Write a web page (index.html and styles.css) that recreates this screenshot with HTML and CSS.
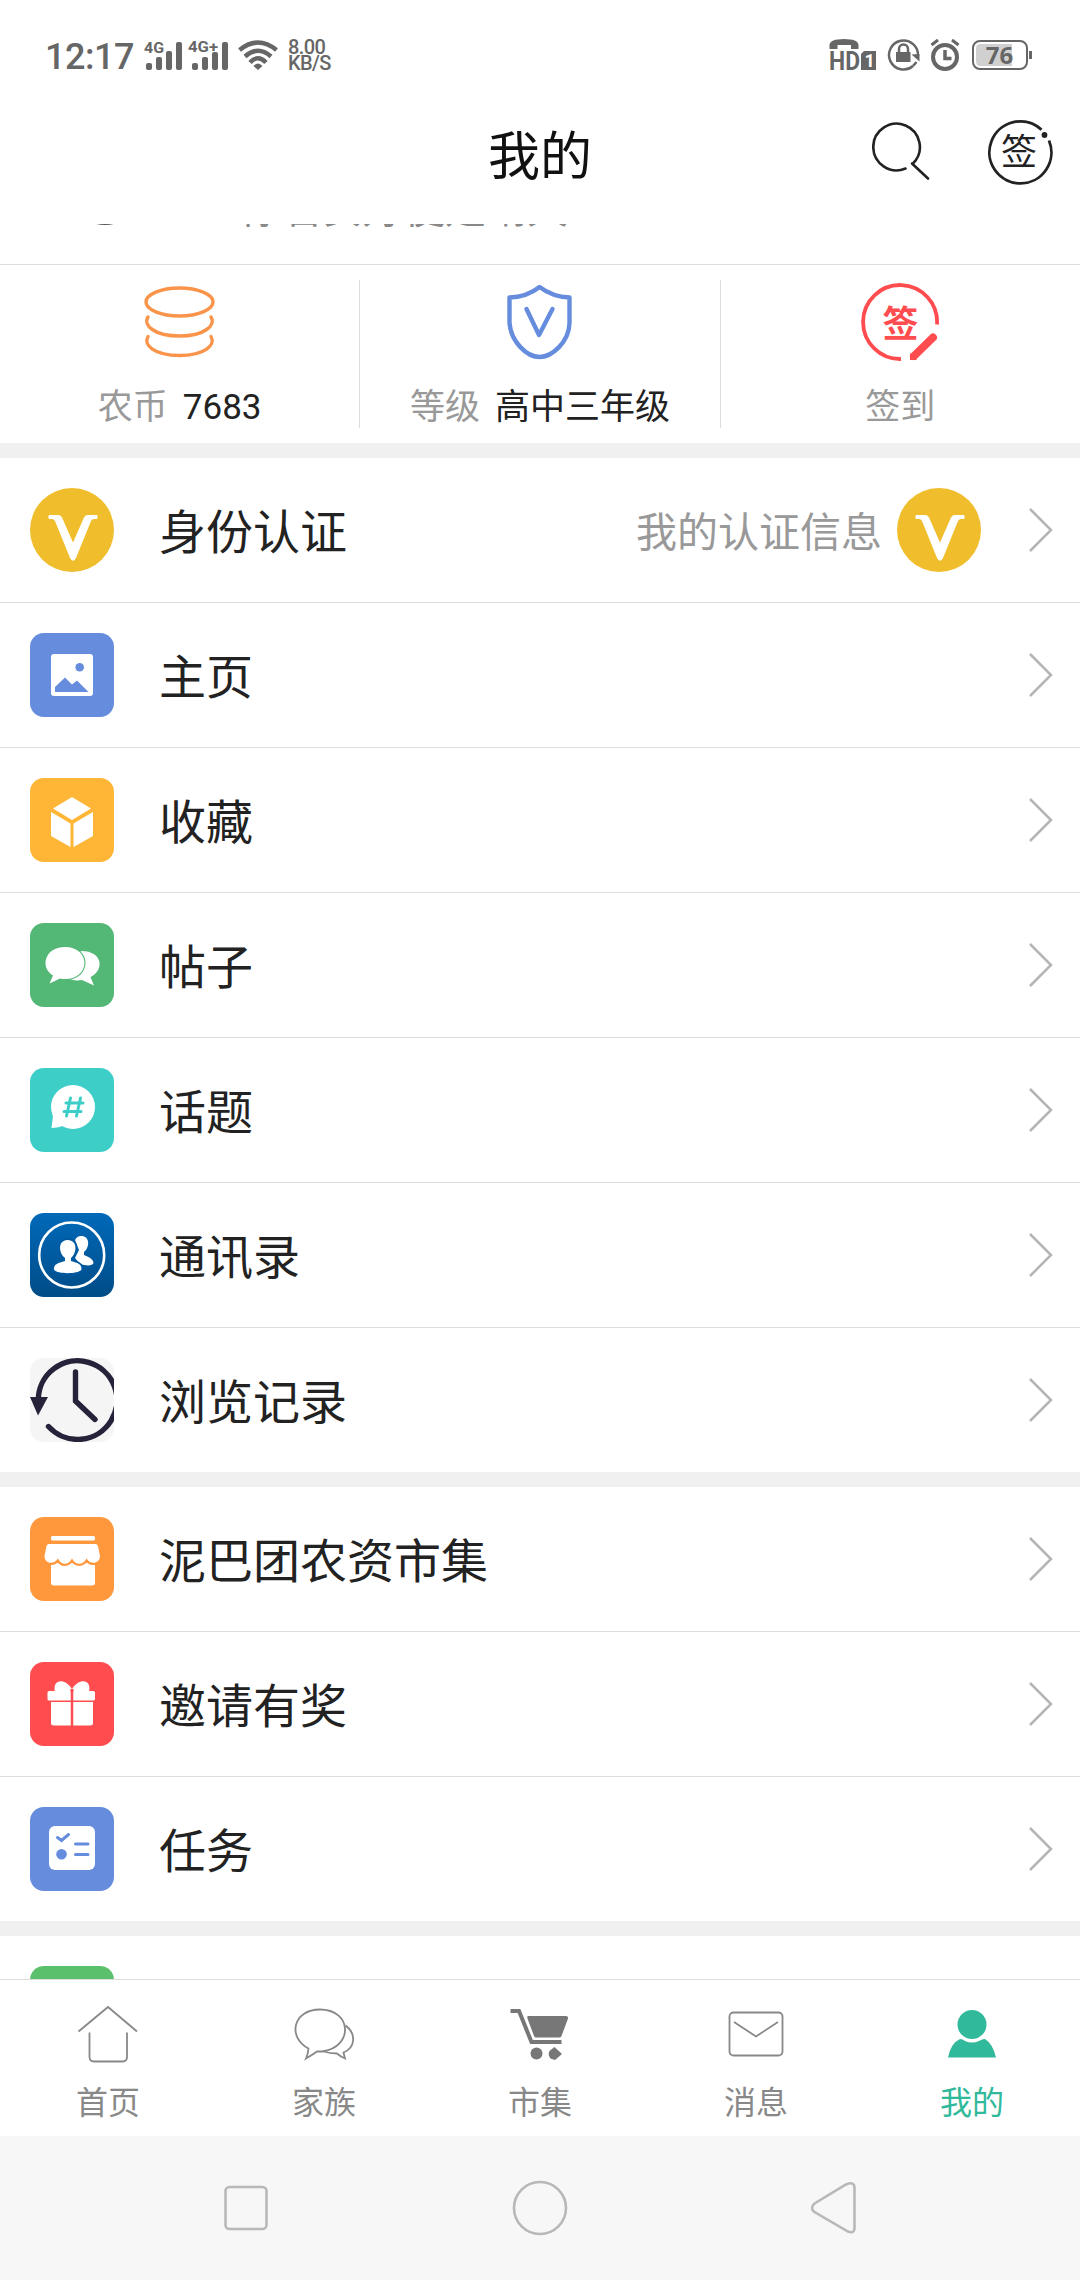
FILE: index.html
```html
<!DOCTYPE html>
<html lang="zh-CN">
<head>
    <meta charset="UTF-8">
    <title>我的</title>
    <link rel="stylesheet" href="styles.css">
</head>
<body>
    <div class="status-bar">
        <span class="time">12:17</span>
        <svg class="signal" width="39" height="32" viewBox="0 0 39 32">
            <text x="0" y="14" class="net" textLength="20" lengthAdjust="spacingAndGlyphs">4G</text>
            <rect x="2" y="24" width="6" height="7" rx="2"/>
            <rect x="12" y="18" width="6" height="13" rx="2"/>
            <rect x="22" y="12" width="6" height="19" rx="2"/>
            <rect x="32" y="3" width="6" height="28" rx="2"/>
        </svg>
        <svg class="signal second" width="41" height="32" viewBox="0 0 41 32">
            <text x="0" y="13" class="net" textLength="30" lengthAdjust="spacingAndGlyphs">4G+</text>
            <rect x="4" y="24" width="6" height="7" rx="2"/>
            <rect x="14" y="18" width="6" height="13" rx="2"/>
            <rect x="24" y="13" width="6" height="18" rx="2"/>
            <rect x="34" y="3" width="6" height="28" rx="2"/>
        </svg>
        <svg class="wifi" width="40" height="32" viewBox="0 0 40 32">
            <g fill="none" stroke="#666" stroke-width="4.500">
                <path d="M1.500 11Q20 -4 38.500 11"/>
                <path d="M7 17.500Q20 6 33 17.500"/>
                <path d="M12 23.500Q20 15 28 23.500"/>
            </g>
            <path d="M15.500 27Q20 22 24.500 27L20 31Z"/>
        </svg>
        <div class="speed">
            <span>8.00</span>
            <span>KB/S</span>
        </div>
        <div class="status-right">
            <svg width="48" height="34" viewBox="0 0 48 34">
                <path d="M0.500 11V7Q1 1 15 1T29.500 7V11H22V7H8.500V11Z"/>
                <text x="0" y="31.500" class="hd" textLength="31" lengthAdjust="spacingAndGlyphs">HD</text>
                <path d="M35 13H47V32H32V16Z"/>
                <text x="35.500" y="29" class="sim">1</text>
            </svg>
            <svg width="34" height="34" viewBox="0 0 34 34">
                <path d="M26 28A14.500 14.500 0 1 1 31 18" fill="none" stroke="#666" stroke-width="2.500"/>
                <path d="M24.500 16.500L32.500 23.500V16Z"/>
                <path d="M29.500 24L26 28" stroke="#666" stroke-width="2.500"/>
                <rect x="9" y="14" width="14.500" height="10"/>
                <path d="M12 15V11a4.500 4.500 0 0 1 9 0V15" fill="none" stroke="#666" stroke-width="2.500"/>
            </svg>
            <svg width="30" height="34" viewBox="0 0 30 34">
                <g fill="none" stroke="#666">
                    <circle cx="14" cy="19" r="12" stroke-width="4"/>
                    <path d="M14 12V20.500H20.500" stroke-width="3.500"/>
                    <path d="M0.500 7L7 2M27.500 7L21 2" stroke-width="3"/>
                </g>
            </svg>
            <svg width="62" height="34" viewBox="0 0 62 34">
                <rect x="2" y="3" width="54" height="28" rx="7" fill="none" stroke="#666" stroke-width="2"/>
                <path d="M9 6H41V28H9Q5 28 5 23V11Q5 6 9 6Z" fill="#d0d0d0"/>
                <rect x="58" y="13" width="3" height="8"/>
                <text x="28.500" y="26" class="percent" text-anchor="middle">76</text>
            </svg>
        </div>
    </div>

    <header class="header">
        <h1>我的</h1>
        <div class="header-actions">
            <svg width="60" height="60" viewBox="0 0 60 60" fill="none" stroke="#222" stroke-width="2.600">
                <path d="M33.500 46.500A23.300 23.300 0 1 1 41 41.500L40 41.500L56 56.500" stroke-linecap="round" stroke-linejoin="round"/>
            </svg>
            <svg class="sign-btn" width="68" height="68" viewBox="0 0 68 68">
                <path d="M55.500 11.700A31 31 0 1 0 63 22.500" fill="none" stroke="#222" stroke-width="2.800"/>
                <circle cx="58.500" cy="17" r="2.900" fill="#222"/>
                <text x="33" y="47" text-anchor="middle">签</text>
            </svg>
        </div>
    </header>

    <div class="content">
        <!-- signature line, scrolled under the header -->
        <div class="signature">
            <svg width="30" height="40" viewBox="0 0 30 40"><ellipse cx="15" cy="-3" rx="13" ry="4" fill="#555"/></svg>
            <p>你若安好便是晴天</p>
        </div>

        <div class="stats">
            <div class="stat">
                <svg width="80" height="80" viewBox="0 0 80 80" fill="none" stroke="#f9944a" stroke-width="3.400" stroke-linecap="round">
                    <ellipse cx="39.500" cy="20" rx="33.500" ry="14"/>
                    <path d="M8 35C3 43 14 54 39.500 54S76 43 71 35"/>
                    <path d="M8 54.500C3 63 14 73.500 39.500 73.500S76 63 71 54.500"/>
                </svg>
                <p>农币 <b>7683</b></p>
            </div>
            <div class="stat">
                <svg width="80" height="80" viewBox="0 0 80 80" fill="none" stroke="#668cdd" stroke-width="4.400" stroke-linecap="round" stroke-linejoin="round">
                    <path d="M39.500 5Q27 15 9.500 15.500V41C11 60 27 75 39.500 75S69 60 69.500 41V15.500Q53 15 39.500 5Z"/>
                    <path d="M26.500 27L39 53L52.500 27"/>
                </svg>
                <p>等级 <b>高中三年级</b></p>
            </div>
            <div class="stat">
                <svg width="80" height="80" viewBox="0 0 80 80" fill="none" stroke="#ff4d4f" stroke-width="3.800">
                    <path d="M77 42.500A37 37 0 1 0 41 77"/>
                    <path d="M73 55.500L54 74" stroke-width="8" stroke-linecap="round"/>
                    <path d="M50 71L50 78H57Z" fill="#ff4d4f" stroke="none"/>
                    <text class="sign-text" x="40.500" y="55" text-anchor="middle">签</text>
                </svg>
                <p>签到</p>
            </div>
        </div>

        <div class="list">
            <div class="row">
                <svg class="icon" viewBox="0 0 84 84">
                    <circle cx="42" cy="42" r="42" fill="#f0bd2c"/>
                    <path d="M19 27H28.500Q31 27 32 29.500L43 54.500L54 29.500Q55 27 57.500 27H67Q68.500 29 67 31H64Q62 31 61 33L46 70Q43 75.500 40 70L25 33Q24 31 22 31H19Q17.500 29 19 27Z" fill="#fff"/>
                </svg>
                <span class="label">身份认证</span>
                <span class="extra">我的认证信息</span>
                <svg class="icon badge" viewBox="0 0 84 84">
                    <circle cx="42" cy="42" r="42" fill="#f0bd2c"/>
                    <path d="M19 27H28.500Q31 27 32 29.500L43 54.500L54 29.500Q55 27 57.500 27H67Q68.500 29 67 31H64Q62 31 61 33L46 70Q43 75.500 40 70L25 33Q24 31 22 31H19Q17.500 29 19 27Z" fill="#fff"/>
                </svg>
                <svg class="arrow" viewBox="0 0 24 44"><path d="M1 1L22 22L1 43"/></svg>
            </div>
            <div class="row">
                <svg class="icon tile blue" viewBox="0 0 84 84">
                    <rect x="21" y="21" width="42" height="42" rx="3" fill="#fff"/>
                    <circle cx="49.700" cy="34.300" r="4.300" fill="#668cdd"/>
                    <path d="M25 54L35 44.500L42 51.500L47 47.500L58.500 59H25Z" fill="#668cdd"/>
                </svg>
                <span class="label">主页</span>
                <svg class="arrow" viewBox="0 0 24 44"><path d="M1 1L22 22L1 43"/></svg>
            </div>
            <div class="row">
                <svg class="icon tile yellow" viewBox="0 0 84 84" fill="#fff">
                    <path d="M42 19L61 30.500L42 42L23 30.500Z"/>
                    <path d="M21 34L40.500 45.500V69L21 58Z"/>
                    <path d="M63 34L43.500 45.500V69L63 58Z"/>
                </svg>
                <span class="label">收藏</span>
                <svg class="arrow" viewBox="0 0 24 44"><path d="M1 1L22 22L1 43"/></svg>
            </div>
            <div class="row">
                <svg class="icon tile green" viewBox="0 0 84 84" fill="#fff">
                    <path d="M51 28C74 28 74 48 60.500 54L64 62.500L52 57C46 58 40 57 36 54Z"/>
                    <path d="M35 24C61 24 61 56 35 56Q32 56 30 55.500L19.500 60.500L23 52.500C10 45 14 24 35 24Z" stroke="#53b775" stroke-width="2" paint-order="stroke"/>
                </svg>
                <span class="label">帖子</span>
                <svg class="arrow" viewBox="0 0 24 44"><path d="M1 1L22 22L1 43"/></svg>
            </div>
            <div class="row">
                <svg class="icon tile teal" viewBox="0 0 84 84">
                    <circle cx="43" cy="39" r="22" fill="#fff"/>
                    <path d="M23 48L21.500 60Q27 60 33 58Z" fill="#fff"/>
                    <path d="M40.500 30L36.500 48M50.500 30L46.500 48M36 35H53M34 43.500H51" stroke="#3ecec8" stroke-width="3" stroke-linecap="round"/>
                </svg>
                <span class="label">话题</span>
                <svg class="arrow" viewBox="0 0 24 44"><path d="M1 1L22 22L1 43"/></svg>
            </div>
            <div class="row">
                <svg class="icon tile contacts" viewBox="0 0 84 84" fill="#fff">
                    <circle cx="41.700" cy="42" r="32.500" fill="none" stroke="#fff" stroke-width="2.600"/>
                    <path d="M51 23C60 23 60 34 54 39V42Q63 45 63.500 50C63 53 56 53 50 51L45 45L49 37L45 27Q47 23 51 23Z"/>
                    <path d="M37.500 27C48 27 47 40 41 45V48C48 50 51.500 51 51.500 56C51 61.500 24 61.500 24 56C24 51 28 50 35 48V45C28 40 28 27 37.500 27Z" stroke="#0059a0" stroke-width="3.500" paint-order="stroke"/>
                </svg>
                <span class="label">通讯录</span>
                <svg class="arrow" viewBox="0 0 24 44"><path d="M1 1L22 22L1 43"/></svg>
            </div>
            <div class="row">
                <svg class="icon tile history" viewBox="0 0 84 84">
                    <g fill="none" stroke="#25223a" stroke-width="5.400" stroke-linecap="round">
                        <path d="M8.300 42A39.300 39.300 0 1 1 18.500 68.500"/>
                        <path d="M45.500 14V43L65 61.500"/>
                    </g>
                    <path d="M0 39H18L8 57.500Z" fill="#25223a"/>
                </svg>
                <span class="label">浏览记录</span>
                <svg class="arrow" viewBox="0 0 24 44"><path d="M1 1L22 22L1 43"/></svg>
            </div>
        </div>

        <div class="list">
            <div class="row">
                <svg class="icon tile orange" viewBox="0 0 84 84" fill="#fff">
                    <rect x="21" y="19" width="44" height="4.500" rx="1.500"/>
                    <path d="M21 44H65V66Q65 68.500 62 68.500H24Q21 68.500 21 66Z"/>
                    <path d="M19 27H65Q67.500 27 68 29L70 39C70 47 60 48 56.500 41.500C53 48.500 45.500 48.500 42 41.500C38.500 48.500 31 48.500 28 41.500C24 48 14.500 47 14.500 39L16.500 29Q17 27 19 27Z" stroke="#ff983c" stroke-width="4.500" paint-order="stroke"/>
                </svg>
                <span class="label">泥巴团农资市集</span>
                <svg class="arrow" viewBox="0 0 24 44"><path d="M1 1L22 22L1 43"/></svg>
            </div>
            <div class="row">
                <svg class="icon tile red" viewBox="0 0 84 84" fill="#fff">
                    <path d="M25 30C22 18 34 15 42 27C50 15 62 18 59 30Z"/>
                    <rect x="17.500" y="29" width="47.500" height="9.500" rx="1.500"/>
                    <path d="M21 40H63V61Q63 63.500 60 63.500H24Q21 63.500 21 61Z"/>
                    <path d="M42 30V64" stroke="#ff4d4f" stroke-width="2.500"/>
                    <circle cx="42" cy="28.500" r="1.800" fill="#ff4d4f"/>
                </svg>
                <span class="label">邀请有奖</span>
                <svg class="arrow" viewBox="0 0 24 44"><path d="M1 1L22 22L1 43"/></svg>
            </div>
            <div class="row">
                <svg class="icon tile blue" viewBox="0 0 84 84">
                    <rect x="19" y="19" width="46" height="44" rx="6" fill="#fff"/>
                    <g fill="none" stroke="#668cdd" stroke-width="3" stroke-linecap="round">
                        <path d="M27.500 30.500L31.500 33.500L38.500 27.500"/>
                        <path d="M45.500 37H58M45.500 47.500H58"/>
                    </g>
                    <circle cx="31.500" cy="47.300" r="5.300" fill="#668cdd"/>
                </svg>
                <span class="label">任务</span>
                <svg class="arrow" viewBox="0 0 24 44"><path d="M1 1L22 22L1 43"/></svg>
            </div>
        </div>

        <div class="list">
            <div class="row">
                <svg class="icon tile leaf" viewBox="0 0 84 84"></svg>
            </div>
        </div>
    </div>

    <nav class="tabs">
        <a class="tab">
            <svg width="64" height="64" viewBox="0 0 64 64">
                <path d="M2.500 29.500L32 5L61 29.500M13.500 30.500V55Q13.500 59.500 18 59.500H46.500Q51 59.500 51 55V30.500"/>
            </svg>
            首页
        </a>
        <a class="tab">
            <svg width="64" height="64" viewBox="0 0 64 64">
                <path d="M16.500 46.500C-5 35 1 7.500 28 7.500C60 7.500 62 45 30 49.500Q27 49.500 25 49.500Q20 53 14 56.500Q16 52 16.500 46.500Z"/>
                <path d="M53.500 23.500C65 32 63 46 51.500 50.500L53 56.500Q49 55 45 51.500Q38 51.500 31.500 49.500"/>
            </svg>
            家族
        </a>
        <a class="tab">
            <svg width="64" height="64" viewBox="0 0 64 64">
                <path d="M2.500 9H11L23.500 40H53.500" stroke-width="4" class="handle"/>
                <path d="M20 14H58Q60.500 14 60 16.500L53.500 34Q53 35.500 51 35.500H28Q26.500 35.500 26 34L19.500 16.500Q19 14 20 14Z" class="solid"/>
                <circle cx="28.500" cy="51.500" r="6" class="solid"/>
                <path d="M46.500 45L54 52L47 58L42.500 56.500Q39 52 42 48.500Z" class="solid"/>
            </svg>
            市集
        </a>
        <a class="tab">
            <svg width="64" height="64" viewBox="0 0 64 64">
                <rect x="5.500" y="10.500" width="53" height="43" rx="4"/>
                <path d="M10 20L32 34.500L54 20"/>
            </svg>
            消息
        </a>
        <a class="tab active">
            <svg width="64" height="64" viewBox="0 0 64 64">
                <circle cx="32" cy="22.500" r="14.500" class="solid"/>
                <path d="M8 55.500Q11 41 20 37Q23 37 25 39Q32 42 39 39Q42 37 45 37Q53 42 56 55.500Z" class="solid"/>
            </svg>
            我的
        </a>
    </nav>

    <div class="system-nav">
        <svg width="60" height="60" viewBox="0 0 60 60"><rect x="9.500" y="9" width="41" height="42" rx="4"/></svg>
        <svg width="60" height="60" viewBox="0 0 60 60"><circle cx="30" cy="30" r="26"/></svg>
        <svg width="60" height="60" viewBox="0 0 60 60"><path d="M10.500 25.500L42 6.500Q50.500 3 50.500 10V50Q50.500 56 44 53.500L10.500 34Q5.500 30 10.500 25.500Z"/></svg>
    </div>
</body>
</html>
```
FILE: styles.css
```css
* {
    box-sizing: border-box;
}
body {
    margin: 0;
    width: 1080px;
    height: 2280px;
    overflow: hidden;
    display: flex;
    flex-direction: column;
    background-color: #fff;
    color: #222;
    font-family: "Noto Sans CJK SC", sans-serif;
}
svg {
    display: block;
    flex-shrink: 0;
}
p, h1 {
    margin: 0;
    font-weight: normal;
}

/* Status bar */
.status-bar {
    height: 108px;
    padding: 2px 47px 0 45px;
    display: flex;
    align-items: center;
    color: #666;
    font-family: Roboto, sans-serif;
}
.status-bar svg {
    fill: #666;
    overflow: visible;
}
.time {
    width: 99px;
    font-size: 36px;
    font-weight: 500;
    line-height: 40px;
    padding-top: 3px;
    letter-spacing: -0.5px;
}
.second {
    margin-left: 5px;
}
.wifi {
    margin-left: 9px;
}
.net {
    font-size: 15px;
    font-weight: bold;
}
.speed {
    display: flex;
    flex-direction: column;
    margin-left: 10px;
    font-size: 20px;
    font-weight: 500;
    line-height: 16px;
    letter-spacing: -0.6px;
}
.status-right {
    display: flex;
    margin-left: auto;
    gap: 10px;
}
.hd {
    font-size: 26px;
    font-weight: bold;
}
.sim {
    font-size: 18px;
    font-weight: bold;
    fill: #fff;
}
.percent {
    font: bold 24px "Noto Sans", sans-serif;
}

/* Header */
.header {
    height: 116px;
    padding: 0 26px 0 0;
    display: grid;
    grid-template-columns: 1fr auto 1fr;
    align-items: center;
}
.header h1 {
    grid-column: 2;
    margin-left: 26px;
    font-size: 52px;
    line-height: 60px;
    padding-bottom: 27px;
    color: #111;
}
.header-actions {
    display: flex;
    justify-content: flex-end;
    align-items: center;
    gap: 54px;
    padding-bottom: 28px;
}
.sign-btn text {
    font-size: 36px;
    fill: #222;
}

/* Content */
.content {
    height: 1755px;
    overflow: hidden;
}
.signature {
    height: 40px;
    display: flex;
    overflow: hidden;
    padding-left: 90px;
    color: #888;
}
.signature p {
    margin: -44px 0 0 120px;
    font-size: 41px;
    line-height: 50px;
}
.stats {
    height: 179px;
    display: flex;
    border-top: 1px solid #ddd;
    padding: 15px 0;
}
.stat {
    flex: 1;
    display: flex;
    flex-direction: column;
    align-items: center;
    border-right: 1px solid #ddd;
}
.stat:last-child {
    border-right: none;
}
.stat svg {
    margin-top: 2px;
}
.stat p {
    display: flex;
    align-items: baseline;
    gap: 15px;
    margin-top: 19px;
    font-size: 35px;
    line-height: 46px;
    color: #999;
}
.stat b {
    font-family: Roboto, "Noto Sans CJK SC", sans-serif;
    font-weight: normal;
    color: #222;
}
.sign-text {
    font-size: 36px;
    font-weight: bold;
    fill: #ff4d4f;
    stroke: none;
}

/* Menu */
.list {
    border-top: 15px solid #f0f0f0;
}
.row {
    height: 145px;
    display: flex;
    align-items: center;
    padding: 0 27px 0 30px;
    border-bottom: 1px solid #ddd;
}
.row:last-child {
    height: 144px;
    border-bottom: none;
}
.icon {
    width: 84px;
    height: 84px;
}
.tile {
    border-radius: 14px;
}
.blue { background-color: #668cdd; }
.yellow { background-color: #ffb636; }
.green { background-color: #53b775; }
.teal { background-color: #3ecec8; }
.contacts { background: linear-gradient(#0069b9, #004c87); }
.history { background-color: #f5f5f5; }
.orange { background-color: #ff983c; }
.red { background-color: #ff4d4f; }
.leaf { background-color: #5bc06c; }
.label {
    margin-left: 45px;
    padding-bottom: 3px;
    font-size: 47px;
    line-height: 60px;
}
.extra {
    margin-left: auto;
    padding-bottom: 2px;
    font-size: 41px;
    line-height: 60px;
    color: #999;
}
.badge {
    margin-left: 15px;
}
.arrow {
    width: 24px;
    height: 44px;
    margin-left: auto;
    fill: none;
    stroke: #b5b5b5;
    stroke-width: 2.5;
}
.badge + .arrow {
    margin-left: 48px;
}

/* Bottom tabs */
.tabs {
    height: 157px;
    display: flex;
    border-top: 1px solid #ddd;
    padding-top: 22px;
}
.tab {
    flex: 1;
    display: flex;
    flex-direction: column;
    align-items: center;
    gap: 12px;
    font-size: 32px;
    line-height: 44px;
    color: #888;
}
.tab svg {
    fill: none;
    stroke: #888;
    stroke-width: 1.8;
}
.tab .handle {
    stroke: #777;
}
.tab .solid {
    fill: #777;
    stroke: none;
}
.active {
    color: #31b99b;
}
.active .solid {
    fill: #31b99b;
}
.system-nav {
    height: 144px;
    display: flex;
    justify-content: center;
    align-items: center;
    gap: 234px;
    background-color: #f7f7f7;
}
.system-nav svg {
    fill: none;
    stroke: #b8b8b8;
    stroke-width: 2.6;
}
```
